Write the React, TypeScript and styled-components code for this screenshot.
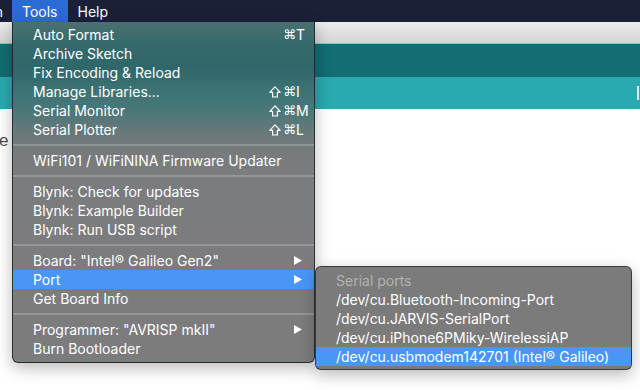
import React from "react";
import styled, { createGlobalStyle } from "styled-components";

const GlobalStyle = createGlobalStyle`
  html, body { margin: 0; padding: 0; background: #fff; }
  body {
    width: 640px; height: 390px; overflow: hidden;
    font-family: Inter, "DejaVu Sans", "Liberation Sans", sans-serif;
    -webkit-font-smoothing: antialiased;
  }
`;

const Screen = styled.div`
  position: relative;
  width: 640px;
  height: 390px;
  overflow: hidden;
  background: #fff;
  display: flex;
  flex-direction: column;
`;

const MenuBar = styled.div`
  height: 22px;
  flex: none;
  display: flex;
  align-items: stretch;
  background: #1b2039;
`;

const MenuTitle = styled.div<{ $active?: boolean }>`
  display: flex;
  align-items: center;
  padding: 0 10px;
  color: #fff;
  font-size: 14px;
  background: ${(p) => (p.$active ? "#2c6bd6" : "transparent")};
`;

const ClippedTitle = styled(MenuTitle)`
  width: 12px;
  padding: 0 9px 0 0;
  box-sizing: border-box;
  justify-content: flex-end;
  overflow: hidden;
  white-space: nowrap;
`;

const Toolbar = styled.div`
  height: 21px;
  flex: none;
  background: linear-gradient(#ececec, #d5d5d5);
  border-bottom: 1px solid #b3b3b3;
`;

const Header = styled.div`
  height: 33px;
  flex: none;
  background: #136d72;
`;

const Tabs = styled.div`
  height: 32px;
  flex: none;
  display: flex;
  justify-content: flex-end;
  align-items: center;
  background: #2aaab0;
`;

const TabMark = styled.div`
  width: 2px;
  height: 14px;
  background: #d8eeee;
  margin-right: 1px;
`;

const Editor = styled.div`
  flex: 1;
  background: #fff;
  padding-top: 22px;
  font-size: 17px;
  line-height: 20px;
  color: #4a4a4a;
  font-family: "Liberation Sans", Arial, sans-serif;
  text-indent: -1px;
`;

const Dropdown = styled.div`
  position: absolute;
  left: 12px;
  top: 22px;
  width: 303px;
  box-sizing: border-box;
  padding: 3px 0 4px;
  border: 1px solid rgba(20, 24, 26, 0.75);
  border-top: none;
  border-radius: 0 0 6px 6px;
  background: linear-gradient(
    to bottom,
    #4a7071 0px,
    #356a6c 22px,
    #2f676a 45px,
    #3c7475 70px,
    #4a7779 88px,
    #66787a 108px,
    #777a7c 128px,
    #7b7c7e 150px,
    #7c7c7d 100%
  );
  box-shadow: 0 5px 16px rgba(0, 0, 0, 0.28);
`;

const Submenu = styled.div`
  position: absolute;
  left: 315px;
  top: 266px;
  width: 317px;
  box-sizing: border-box;
  padding: 4px 0 3px;
  border: 1px solid rgba(30, 30, 30, 0.7);
  border-radius: 6px;
  background: #7b7b7b;
  box-shadow: 0 5px 16px rgba(0, 0, 0, 0.28);
`;

const Item = styled.div<{ $selected?: boolean; $disabled?: boolean }>`
  height: 19px;
  display: flex;
  align-items: center;
  padding: 0 10px 0 20px;
  font-size: 14px;
  white-space: nowrap;
  color: ${(p) => (p.$disabled ? "#b2b2b2" : "#fff")};
  background: ${(p) => (p.$selected ? "#4a96f7" : "transparent")};
`;

const Label = styled.span`
  flex: 1;
`;

const EndSlot = styled.span`
  width: 35px;
  display: grid;
  grid-template-columns: 14px 13px 1fr;
  align-items: center;
`;

const KeyCell = styled.span<{ $col: number }>`
  grid-column: ${(p) => p.$col};
  grid-row: 1;
  display: flex;
  align-items: center;
  font-family: ${(p) => (p.$col === 3 ? "Inter, sans-serif" : '"DejaVu Sans", sans-serif')};
  font-size: ${(p) => (p.$col === 2 ? "13px" : "14px")};
`;

const ArrowCell = styled.span`
  width: 35px;
  display: flex;
  justify-content: flex-end;
  padding-right: 2px;
  box-sizing: border-box;
`;

const Separator = styled.div`
  height: 2px;
  margin: 5px 0;
  background: rgba(255, 255, 255, 0.2);
`;

const Arrow = () => (
  <svg width="8" height="9" viewBox="0 0 8 9">
    <path d="M0 0 L8 4.5 L0 9 Z" fill="#fff" />
  </svg>
);

const ShiftIcon = () => (
  <svg width="12" height="12" viewBox="0 0 12 12">
    <path
      d="M6 0.9 L11.2 6.4 H8.4 V11 H3.6 V6.4 H0.8 Z"
      fill="none"
      stroke="#fff"
      strokeWidth="1.2"
      strokeLinejoin="round"
    />
  </svg>
);

type Entry =
  | { sep: true }
  | { label: string; shift?: boolean; key?: string; arrow?: boolean; selected?: boolean };

const toolsItems: Entry[] = [
  { label: "Auto Format", key: "T" },
  { label: "Archive Sketch" },
  { label: "Fix Encoding & Reload" },
  { label: "Manage Libraries...", shift: true, key: "I" },
  { label: "Serial Monitor", shift: true, key: "M" },
  { label: "Serial Plotter", shift: true, key: "L" },
  { sep: true },
  { label: "WiFi101 / WiFiNINA Firmware Updater" },
  { sep: true },
  { label: "Blynk: Check for updates" },
  { label: "Blynk: Example Builder" },
  { label: "Blynk: Run USB script" },
  { sep: true },
  { label: 'Board: "Intel® Galileo Gen2"', arrow: true },
  { label: "Port", arrow: true, selected: true },
  { label: "Get Board Info" },
  { sep: true },
  { label: 'Programmer: "AVRISP mkII"', arrow: true },
  { label: "Burn Bootloader" },
];

const ports = [
  "/dev/cu.Bluetooth-Incoming-Port",
  "/dev/cu.JARVIS-SerialPort",
  "/dev/cu.iPhone6PMiky-WirelessiAP",
];

export default function App() {
  return (
    <>
      <GlobalStyle />
      <Screen>
        <MenuBar>
          <ClippedTitle>Sketch</ClippedTitle>
          <MenuTitle $active>Tools</MenuTitle>
          <MenuTitle>Help</MenuTitle>
        </MenuBar>
        <Toolbar />
        <Header />
        <Tabs>
          <TabMark />
        </Tabs>
        <Editor>e</Editor>

        <Dropdown>
          {toolsItems.map((it, i) =>
            "sep" in it ? (
              <Separator key={i} />
            ) : (
              <Item key={i} $selected={it.selected}>
                <Label>{it.label}</Label>
                {it.key && (
                  <EndSlot>
                    {it.shift && (
                      <KeyCell $col={1}>
                        <ShiftIcon />
                      </KeyCell>
                    )}
                    <KeyCell $col={2}>⌘</KeyCell>
                    <KeyCell $col={3}>{it.key}</KeyCell>
                  </EndSlot>
                )}
                {it.arrow && (
                  <ArrowCell>
                    <Arrow />
                  </ArrowCell>
                )}
              </Item>
            )
          )}
        </Dropdown>

        <Submenu>
          <Item $disabled>Serial ports</Item>
          {ports.map((p) => (
            <Item key={p}>{p}</Item>
          ))}
          <Item $selected>/dev/cu.usbmodem142701 (Intel® Galileo)</Item>
        </Submenu>
      </Screen>
    </>
  );
}
